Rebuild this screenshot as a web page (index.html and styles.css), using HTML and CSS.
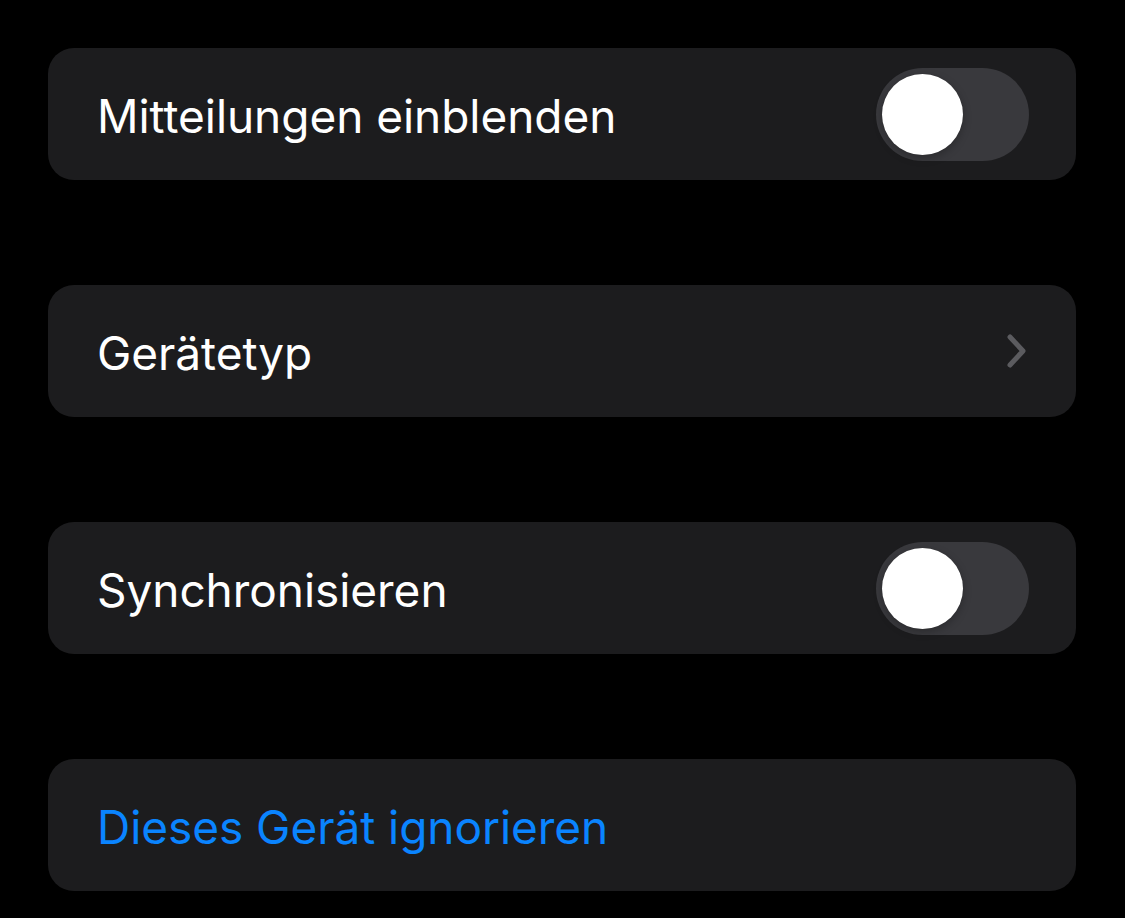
FILE: index.html
```html
<!DOCTYPE html>
<html lang="de">
<head>
<meta charset="utf-8">
<link rel="stylesheet" href="styles.css">
</head>
<body>
<main class="list">
  <div class="card">
    <span class="label">Mitteilungen einblenden</span>
    <span class="toggle"><span class="knob"></span></span>
  </div>
  <div class="card">
    <span class="label">Gerätetyp</span>
    <svg class="chevron" width="22" height="36" viewBox="0 0 22 36"><path d="M4 4 L17 18 L4 32" fill="none" stroke="#5b5b5f" stroke-width="5" stroke-linecap="round" stroke-linejoin="round"/></svg>
  </div>
  <div class="card">
    <span class="label">Synchronisieren</span>
    <span class="toggle"><span class="knob"></span></span>
  </div>
  <div class="card">
    <span class="label link">Dieses Gerät ignorieren</span>
  </div>
</main>
</body>
</html>
```
FILE: styles.css
```css
html, body {
  margin: 0;
  padding: 0;
  background: #000;
}
body {
  font-family: Inter, "Noto Sans", sans-serif;
  -webkit-font-smoothing: antialiased;
}
.list {
  display: flex;
  flex-direction: column;
  gap: 105px;
  padding: 48px 49px 0 48px;
}
.card {
  height: 132px;
  background: #1c1c1e;
  border-radius: 26px;
  display: flex;
  align-items: center;
  justify-content: space-between;
  padding: 0 47px 0 49px;
  box-sizing: border-box;
}
.label {
  color: #fff;
  font-size: 46px;
  letter-spacing: -0.05px;
  line-height: 1;
  padding-top: 4px;
}
.link {
  color: #0a84ff;
}
.toggle {
  width: 153px;
  height: 93px;
  border-radius: 47px;
  background: #39393d;
  position: relative;
  flex: none;
}
.knob {
  position: absolute;
  left: 6px;
  top: 6px;
  width: 81px;
  height: 81px;
  border-radius: 50%;
  background: #fff;
  box-shadow: 0 3px 8px rgba(0,0,0,0.25), 0 0 1px rgba(0,0,0,0.2);
}
.chevron {
  flex: none;
  margin-right: 1px;
}
```
